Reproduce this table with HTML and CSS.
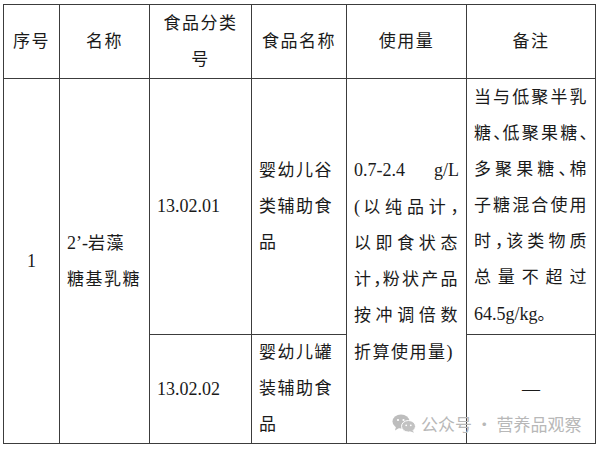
FILE: index.html
```html
<!DOCTYPE html>
<html lang="zh-CN">
<head>
<meta charset="utf-8">
<link rel="stylesheet" href="styles.css">
</head>
<body>
<div class="page">
<table class="spec">
  <colgroup>
    <col class="w1"><col class="w2"><col class="w3"><col class="w4"><col class="w5"><col class="w6">
  </colgroup>
  <thead>
    <tr class="hd">
      <th>序号</th>
      <th>名称</th>
      <th>食品分类号</th>
      <th>食品名称</th>
      <th>使用量</th>
      <th>备注</th>
    </tr>
  </thead>
  <tbody>
    <tr class="r1">
      <td rowspan="2" class="mid"><span class="lat">1</span></td>
      <td rowspan="2" class="txt"><span class="lat">2’-</span>岩藻<br>糖基乳糖</td>
      <td class="txt"><span class="lat">13.02.01</span></td>
      <td class="txt">婴幼儿谷<br>类辅助食<br>品</td>
      <td rowspan="2" class="txt">
        <span class="jl"><span class="lat">0.7-2.4 g/L</span></span>
        <span class="jl"><span class="lat">(</span>以纯品计<span class="p">，</span></span>
        <span class="jl">以即食状态</span>
        <span class="jl">计<span class="p">，</span>粉状产品</span>
        <span class="jl">按冲调倍数</span>
        <span class="ln">折算使用量<span class="lat">)</span></span>
      </td>
      <td class="txt">
        <span class="jl">当与低聚半乳</span>
        <span class="jl">糖<span class="p">、</span>低聚果糖<span class="p">、</span></span>
        <span class="jl">多聚果糖<span class="p">、</span>棉</span>
        <span class="jl">子糖混合使用</span>
        <span class="jl">时<span class="p">，</span>该类物质</span>
        <span class="jl">总量不超过</span>
        <span class="ln"><span class="lat">64.5g/kg</span>。</span>
      </td>
    </tr>
    <tr class="r2">
      <td class="txt"><span class="lat">13.02.02</span></td>
      <td class="txt">婴幼儿罐<br>装辅助食<br>品</td>
      <td class="dash"><span class="lat">—</span></td>
    </tr>
  </tbody>
</table>
<div class="wm">
  <svg class="wm-icon" viewBox="0 0 24 19" width="24" height="19" aria-hidden="true">
    <ellipse cx="9" cy="7.5" rx="8.5" ry="7" fill="#bdbdbd"/>
    <path d="M4 12.5 L3 16.5 L7.5 13.8 Z" fill="#bdbdbd"/>
    <circle cx="6" cy="6" r="1.1" fill="#fff"/>
    <circle cx="11.5" cy="6" r="1.1" fill="#fff"/>
    <ellipse cx="16.5" cy="12.3" rx="7" ry="5.8" fill="#c2c2c2" stroke="#fff" stroke-width="1"/>
    <path d="M20.5 16.3 L22 18.8 L18 17.3 Z" fill="#c2c2c2"/>
    <circle cx="14.2" cy="11.3" r="0.9" fill="#fff"/>
    <circle cx="18.8" cy="11.3" r="0.9" fill="#fff"/>
  </svg>
  <span class="wm-text">公众号 · 营养品观察</span>
</div>
</div>
</body>
</html>
```

FILE: styles.css
```css
html, body {
  margin: 0;
  padding: 0;
  background: #ffffff;
}

.page {
  position: relative;
  width: 600px;
  height: 449px;
  overflow: hidden;
  padding: 4px 0 0 3px;
  box-sizing: border-box;
}

.spec {
  border-collapse: collapse;
  table-layout: fixed;
  width: 592px;
  font-family: "Liberation Serif", "Noto Sans CJK SC", serif;
  font-size: 17px;
  line-height: 36px;
  letter-spacing: 1.5px;
  color: #1a1a1a;
}

.w1 { width: 56px; }
.w2 { width: 90px; }
.w3 { width: 102px; }
.w4 { width: 95px; }
.w5 { width: 120px; }
.w6 { width: 129px; }

.spec th,
.spec td {
  border: 1px solid #3c3c3c;
  padding: 0 7px;
  vertical-align: middle;
}

.spec th {
  font-weight: normal;
  text-align: center;
}

.hd { height: 74px; }
.r1 { height: 256px; }
.r2 { height: 109px; }

.lat {
  font-family: "Liberation Serif", serif;
  letter-spacing: 0;
  font-size: 18px;
}

.p {
  font-feature-settings: "halt";
  letter-spacing: 0;
}

.mid { text-align: center; }

.txt { text-align: left; }

.jl {
  display: block;
  white-space: nowrap;
  text-align: justify;
  text-align-last: justify;
}

.ln {
  display: block;
  white-space: nowrap;
  text-align: left;
}

.dash {
  text-align: center;
  padding-right: 26px;
}

.wm {
  position: absolute;
  left: 392px;
  top: 411px;
  display: flex;
  align-items: center;
  gap: 5px;
  color: #b8b8b8;
  font-family: "Noto Sans CJK SC", sans-serif;
  font-size: 17px;
  line-height: 25px;
}

.wm-icon { display: block; }
```
